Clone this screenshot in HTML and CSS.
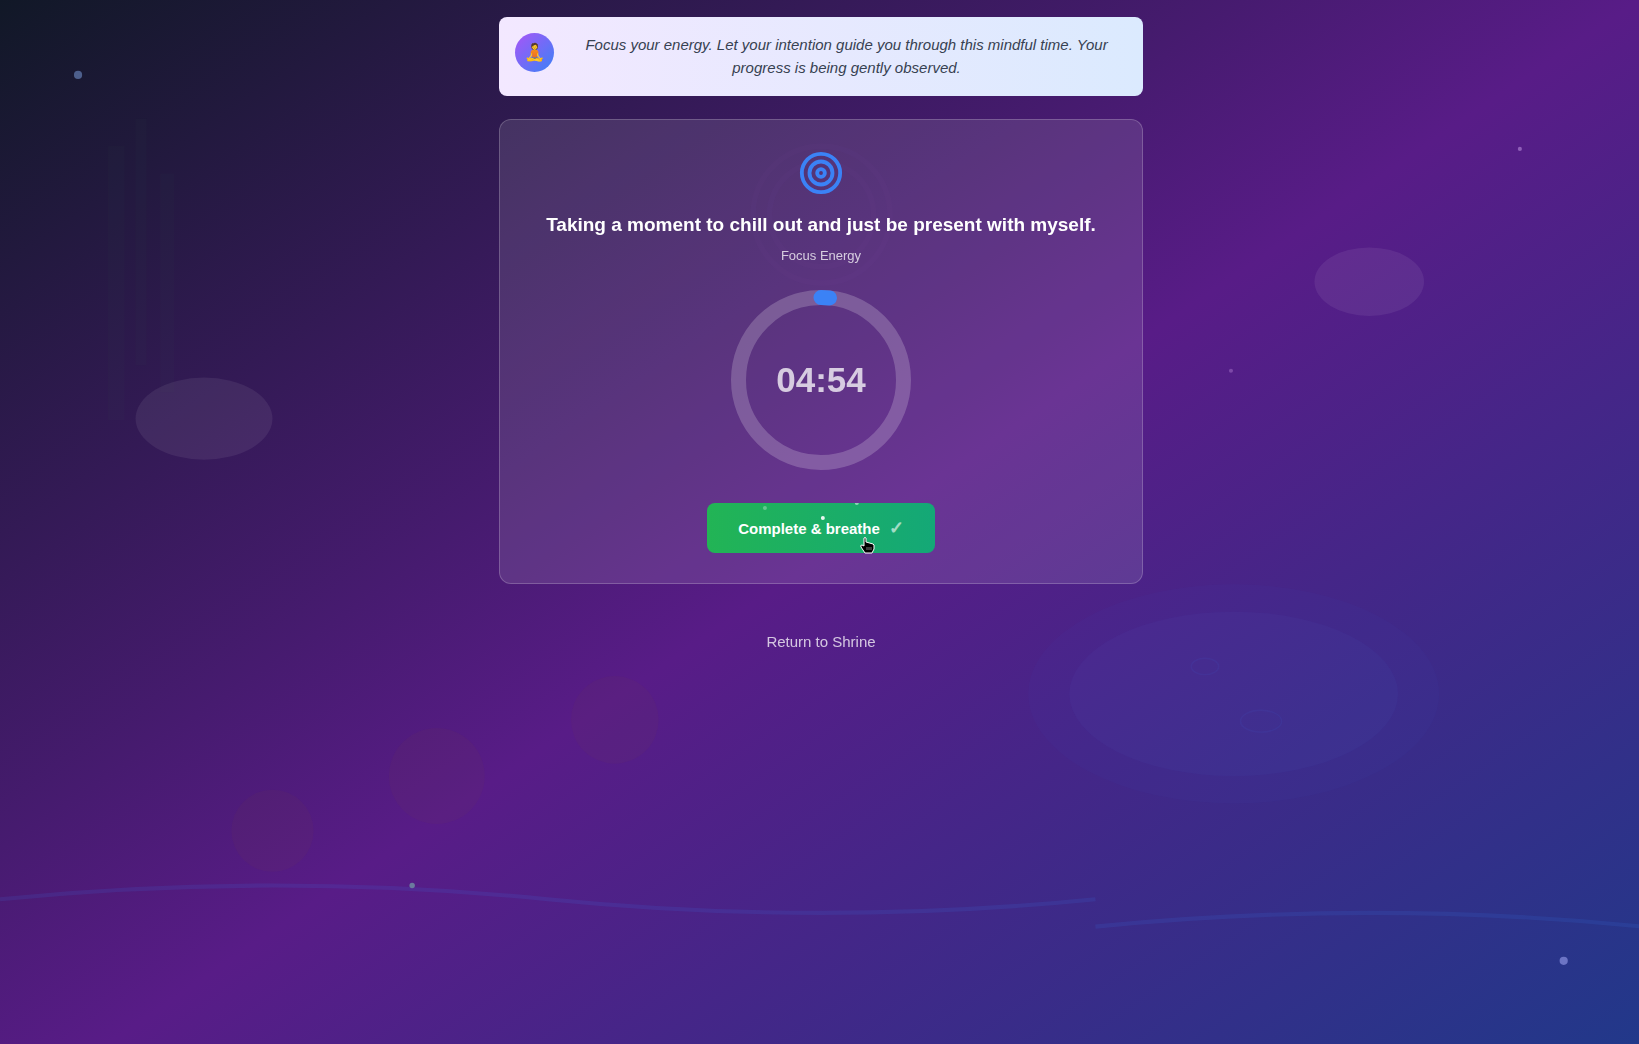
FILE: index.html
```html
<!DOCTYPE html>
<html lang="en">
<head>
<meta charset="utf-8">
<meta name="viewport" content="width=device-width, initial-scale=1">
<title>Focus Energy</title>
<link rel="stylesheet" href="styles.css">
</head>
<body>
<svg class="scenery" viewBox="0 -7 1197 763" preserveAspectRatio="xMinYMid slice" aria-hidden="true">
  <g fill="#4d8b61" opacity="0.03">
    <rect x="79" y="100" width="12" height="200"/>
    <rect x="99" y="80" width="8" height="180"/>
    <rect x="117" y="120" width="10" height="160"/>
  </g>
  <g fill="#fff">
    <ellipse cx="149" cy="299" rx="50" ry="30" opacity="0.07"/>
    <ellipse cx="1000" cy="199" rx="40" ry="25" opacity="0.07"/>
  </g>
  <g fill="#3b82f6">
    <ellipse cx="901" cy="500" rx="150" ry="80" opacity="0.03"/>
    <ellipse cx="901" cy="500" rx="120" ry="60" fill="#60a5fa" opacity="0.04"/>
  </g>
  <g fill="none" stroke="#3b82f6" stroke-width="1" opacity="0.07">
    <ellipse cx="880" cy="480" rx="10" ry="6"/>
    <ellipse cx="921" cy="520" rx="15" ry="8"/>
  </g>
  <g fill="#84552a" opacity="0.06">
    <circle cx="199" cy="600" r="30"/>
    <circle cx="319" cy="560" r="35"/>
    <circle cx="449" cy="519" r="32"/>
  </g>
  <g fill="none" stroke="#3b82f6" stroke-width="3" opacity="0.12">
    <path d="M0 650Q200 630 400 650T800 650"/>
    <path d="M800 670Q1000 650 1200 670"/>
  </g>
  <g fill="none" stroke="#c084fc" stroke-width="4" opacity="0.02">
    <circle cx="600" cy="150" r="50"/>
    <circle cx="600" cy="150" r="38"/>
  </g>
  <circle cx="57" cy="48" r="3" fill="#4d5f8c"/>
  <circle cx="1110" cy="102" r="1.5" fill="#8f5fb8"/>
  <circle cx="899" cy="264" r="1.5" fill="#7d49a8"/>
  <circle cx="301" cy="640" r="2" fill="#6b7a9e"/>
  <circle cx="1142" cy="695" r="3" fill="#6c74c4"/>
</svg>

<main class="page">
  <section class="guide">
    <span class="avatar" aria-hidden="true">🧘</span>
    <p class="guide-text">Focus your energy. Let your intention guide you through this mindful time. Your progress is being gently observed.</p>
  </section>

  <section class="card">
    <svg class="target" viewBox="0 0 48 48" aria-hidden="true">
      <g fill="none" stroke="#3b82f6" stroke-width="4">
        <circle cx="24" cy="24" r="20"/>
        <circle cx="24" cy="24" r="12"/>
        <circle cx="24" cy="24" r="4"/>
      </g>
    </svg>
    <h1 class="title">Taking a moment to chill out and just be present with myself.</h1>
    <p class="kind">Focus Energy</p>
    <div class="timer">
      <svg class="ring" viewBox="0 0 180 180" aria-hidden="true">
        <g fill="none" stroke-width="15">
          <circle cx="90" cy="90" r="82.5" stroke="#fff" stroke-opacity="0.2"/>
          <path d="M90 7.5A82.500 82.500 0 0 1 98.500 8" stroke="#3b82f6" stroke-linecap="round"/>
        </g>
      </svg>
      <span class="time" role="timer">04:54</span>
    </div>
    <button class="complete" type="button">
      <span>Complete &amp; breathe</span>
      <span class="check" aria-hidden="true">✓</span>
      <svg class="sparks" viewBox="0 0 228 50" aria-hidden="true">
        <g fill="#fff">
          <circle cx="58" cy="5" r="2" opacity="0.3"/>
          <circle cx="116" cy="15" r="2" opacity="0.9"/>
          <circle cx="150" cy="0" r="2" opacity="0.5"/>
        </g>
      </svg>
      <svg class="cursor" viewBox="0 0 15 17" aria-hidden="true">
        <path d="M4 1Q5 0 6 1V5L13 7L14 8V12L12 16H5L1 10Q0 8 2 8L4 9Z" fill="#000" stroke="#fff"/>
        <path d="M7 10V13M9 10V13M11 10V13" stroke="#777"/>
      </svg>
    </button>
  </section>

  <a class="return" href="#">Return to Shrine</a>
</main>
</body>
</html>
```

FILE: styles.css
```css
* { box-sizing: border-box; }

body {
  margin: 0;
  min-height: 100vh;
  font-family: "Liberation Sans", Arial, sans-serif;
  font-size: 15px;
  line-height: 23px;
  color: #fff;
  background: linear-gradient(to bottom right, #111827, #581c87 50%, #1e3a8a) no-repeat;
  background-size: 100% 107%;
}

h1, p { margin: 0; }

.scenery {
  position: fixed;
  inset: 0;
  width: 100%;
  height: 100%;
}

.page {
  position: relative;
  max-width: 679px;
  margin: 0 auto;
  padding: 17px 16px 17px 19px;
  display: flex;
  flex-direction: column;
  align-items: center;
}

.guide {
  width: 100%;
  display: flex;
  align-items: flex-start;
  gap: 12px;
  padding: 16px 16px 17px;
  margin-bottom: 23px;
  border-radius: 8px;
  background: linear-gradient(to right, #f3e8ff, #dbeafe);
  color: #374151;
}

.avatar {
  flex: none;
  width: 39px;
  height: 39px;
  display: grid;
  place-items: center;
  border-radius: 50%;
  font-size: 17px;
  background: linear-gradient(to bottom right, #a855f7, #3b82f6);
}

.guide-text {
  flex: 1;
  font-style: italic;
  text-align: center;
}

.card {
  width: 100%;
  display: flex;
  flex-direction: column;
  align-items: center;
  padding: 30px;
  border: 1px solid rgba(255, 255, 255, 0.2);
  border-radius: 12px;
  background: rgba(255, 255, 255, 0.11);
}

.target {
  width: 46px;
  height: 46px;
  margin-bottom: 15px;
}

.title {
  font-size: 19px;
  line-height: 27px;
  font-weight: 700;
  text-align: center;
  margin-bottom: 8px;
}

.kind {
  font-size: 13px;
  line-height: 19px;
  color: rgba(255, 255, 255, 0.75);
  margin-bottom: 25px;
}

.timer {
  display: grid;
  place-items: center;
  margin-bottom: 33px;
}

.ring, .time { grid-area: 1 / 1; }

.ring {
  width: 180px;
  height: 180px;
}

.time {
  font-size: 35px;
  line-height: 38px;
  font-weight: 700;
  color: rgba(255, 255, 255, 0.75);
}

.complete {
  position: relative;
  display: flex;
  align-items: center;
  gap: 9px;
  height: 50px;
  padding: 0 31px;
  border: 0;
  border-radius: 8px;
  font: inherit;
  font-weight: 700;
  color: #fff;
  background: linear-gradient(to right, #22b455, #14a877);
  cursor: pointer;
}

.check {
  font-size: 18px;
  opacity: 0.6;
}

.sparks {
  position: absolute;
  inset: 0;
  width: 100%;
  height: 100%;
}

.cursor {
  position: absolute;
  right: 60px;
  bottom: -1px;
  width: 15px;
  height: 17px;
}

.return {
  margin-top: 46px;
  color: rgba(255, 255, 255, 0.75);
  text-decoration: none;
}
```
